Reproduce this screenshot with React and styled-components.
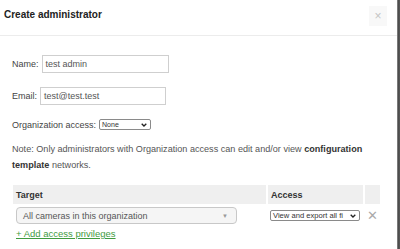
import styled, { createGlobalStyle } from 'styled-components';

const GlobalStyle = createGlobalStyle`
  html, body {
    margin: 0;
    padding: 0;
    background: #fff;
  }
  body {
    font-family: 'Liberation Sans', Arial, sans-serif;
    color: #444;
  }
`;

const Frame = styled.div`
  display: flex;
  width: 400px;
  height: 249px;
  overflow: hidden;
`;

const Modal = styled.div`
  flex: 1;
  display: flex;
  flex-direction: column;
  background: #fff;
`;

const Edge = styled.div`
  width: 3px;
  background: linear-gradient(to right, #9a9a9a, #4a4a4a 40%, #5a5a5a);
`;

const Header = styled.div`
  height: 35px;
  display: flex;
  align-items: center;
  justify-content: space-between;
  border-bottom: 1px solid #ececec;
  padding: 0 10px 0 4px;
`;

const Title = styled.h1`
  margin: 0 0 6px;
  font-size: 10px;
  font-weight: 700;
  color: #222;
`;

const Close = styled.div`
  width: 18px;
  height: 20px;
  margin-top: -4px;
  display: flex;
  align-items: center;
  justify-content: center;
  background: #f8f8f8;
  color: #c4c4c4;
  font-size: 12px;
`;

const Body = styled.div`
  padding: 19px 0 0 12px;
  display: flex;
  flex-direction: column;
`;

const Field = styled.div`
  display: flex;
  align-items: center;
  gap: 3px;
  font-size: 9px;
  color: #444;
  margin-bottom: ${(p) => p.$gap || 14}px;
`;

const TextInput = styled.div`
  box-sizing: border-box;
  width: ${(p) => p.$w}px;
  height: 18px;
  border: 1px solid #cfcfcf;
  padding-left: 3px;
  display: flex;
  align-items: center;
  font-size: 9px;
  color: #555;
`;

const MiniSelect = styled.div`
  box-sizing: border-box;
  width: ${(p) => p.$w}px;
  height: 11px;
  border: 1px solid #8a8a8a;
  border-radius: 2px;
  display: flex;
  align-items: center;
  justify-content: space-between;
  padding: 0 3px 0 2px;
  font-size: ${(p) => p.$fs || 7}px;
  color: #333;
  overflow: hidden;
  white-space: nowrap;
`;

const Note = styled.p`
  margin: 0 12px 12px 0;
  font-size: 9.1px;
  line-height: 16px;
  color: #555;
  b {
    color: #333;
  }
`;

const Table = styled.div`
  display: grid;
  grid-template-columns: 253px 95px 15px;
  column-gap: 2px;
  margin-left: 1px;
`;

const HeadCell = styled.div`
  height: 19px;
  background: #efefef;
  display: flex;
  align-items: center;
  padding-left: 3px;
  font-size: 9px;
  font-weight: 700;
  color: #333;
`;

const Cell = styled.div`
  display: flex;
  align-items: center;
  justify-content: ${(p) => (p.$center ? 'center' : 'flex-start')};
  padding: 3px 0 0 ${(p) => p.$pad || 0}px;
  height: 17px;
`;

const TargetSelect = styled.div`
  box-sizing: border-box;
  width: 221px;
  height: 17px;
  border: 1px solid #c8c8c8;
  border-radius: 4px;
  background: #f5f5f5;
  display: flex;
  align-items: center;
  justify-content: space-between;
  padding: 0 8px 0 6px;
  font-size: 9px;
  color: #555;
`;

const Caret = styled.span`
  font-size: 6px;
  color: #999;
`;

const Remove = styled.span`
  color: #aaa;
  font-size: 13px;
  font-weight: 300;
  line-height: 1;
`;

const AddLink = styled.a`
  margin: 4px 0 0 4px;
  font-size: 9.5px;
  color: #3f9b3f;
  text-decoration: underline;
  cursor: pointer;
`;

const Chevron = () => (
  <svg width="6" height="4" viewBox="0 0 6 4">
    <path d="M0.7 0.7 L3 3 L5.3 0.7" fill="none" stroke="#222" strokeWidth="1.3" />
  </svg>
);

export default function App() {
  return (
    <>
      <GlobalStyle />
      <Frame>
        <Modal>
          <Header>
            <Title>Create administrator</Title>
            <Close>×</Close>
          </Header>
          <Body>
            <Field>
              Name:
              <TextInput $w={127}>test admin</TextInput>
            </Field>
            <Field>
              Email:
              <TextInput $w={126}>test@test.test</TextInput>
            </Field>
            <Field $gap={11}>
              Organization access:
              <MiniSelect $w={52}>
                None
                <Chevron />
              </MiniSelect>
            </Field>
            <Note>
              Note: Only administrators with Organization access can edit and/or view{' '}
              <b>configuration template</b> networks.
            </Note>
            <Table>
              <HeadCell>Target</HeadCell>
              <HeadCell>Access</HeadCell>
              <HeadCell />
              <Cell $pad={3}>
                <TargetSelect>
                  All cameras in this organization
                  <Caret>▼</Caret>
                </TargetSelect>
              </Cell>
              <Cell $pad={2}>
                <MiniSelect $w={90} $fs={7.6}>
                  View and export all fi
                  <Chevron />
                </MiniSelect>
              </Cell>
              <Cell $center>
                <Remove>✕</Remove>
              </Cell>
            </Table>
            <AddLink>+ Add access privileges</AddLink>
          </Body>
        </Modal>
        <Edge />
      </Frame>
    </>
  );
}
